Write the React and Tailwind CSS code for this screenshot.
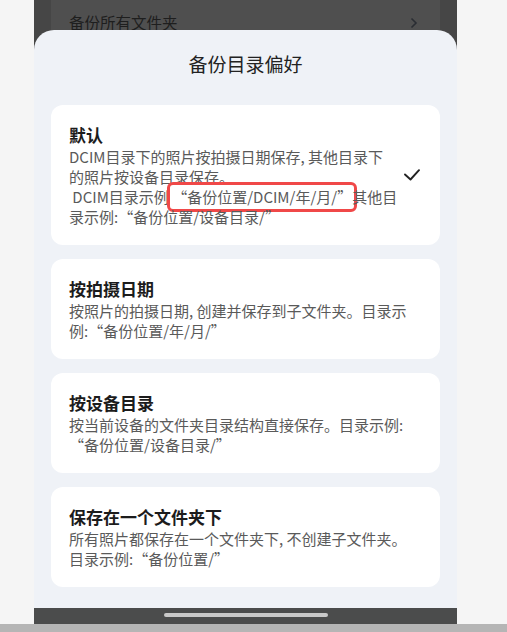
import React from 'react'

const FONT = { fontFamily: '"Noto Sans CJK SC", "Noto Sans", sans-serif' }

const options = [
  {
    title: '按拍摄日期',
    lines: ['按照片的拍摄日期, 创建并保存到子文件夹。目录示', '例:“备份位置/年/月/”'],
  },
  {
    title: '按设备目录',
    lines: ['按当前设备的文件夹目录结构直接保存。目录示例:', '“备份位置/设备目录/”'],
  },
  {
    title: '保存在一个文件夹下',
    lines: ['所有照片都保存在一个文件夹下, 不创建子文件夹。', '目录示例:“备份位置/”'],
  },
]

function Check() {
  return (
    <svg width="16" height="12" viewBox="0 0 16 12" fill="none">
      <path d="M1 5.5 L6.5 10.5 L15 1.2" stroke="#222" strokeWidth="1.9" strokeLinecap="round" strokeLinejoin="round" />
    </svg>
  )
}

export default function App() {
  return (
    <div className="w-full h-[632px] bg-[#f5f5f5] flex flex-col" style={FONT}>
      <div className="flex-1 flex min-h-0 pl-[34px]">
        <div className="w-[423px] bg-[#464646] flex flex-col">
          {/* dimmed page behind the sheet */}
          <div className="h-[30px] px-[17px] overflow-hidden">
            <div className="h-[40px] bg-[#4f4f4f] pl-[18px] pr-[22px] pt-[10px] flex items-start justify-between">
              <span className="text-[15.5px] leading-[24px] text-[#1e1e1e]">备份所有文件夹</span>
              <svg width="8" height="12" viewBox="0 0 8 12" className="mt-[7px]">
                <path d="M1.5 1.5 L6 6 L1.5 10.5" stroke="#2a2d33" strokeWidth="1.6" fill="none" />
              </svg>
            </div>
          </div>

          {/* bottom sheet */}
          <div className="flex-1 bg-[#eff2f7] rounded-t-[20px] px-[17px] pt-[21px]">
            <div className="text-center text-[19px] leading-[26px] text-[#222] mb-[28px]">备份目录偏好</div>

            <div className="flex flex-col gap-[14px]">
              <div className="bg-white rounded-[12px] pl-[18px] pr-[20px] py-[18px] flex items-center justify-between">
                <div>
                  <div className="text-[17px] leading-[24px] font-semibold text-[#1c1c1c]">默认</div>
                  <div className="text-[15px] leading-[20px] text-[#5a5a5a] whitespace-pre">
                    <div>DCIM目录下的照片按拍摄日期保存, 其他目录下</div>
                    <div>的照片按设备目录保存。</div>
                    <div>
                      {' DCIM目录示例 '}
                      <span className="inline-block outline-[3px] outline-solid outline-[#f04848] outline-offset-[2px] rounded-[1px]">“备份位置/DCIM/年/月/”</span>
                      其他目
                    </div>
                    <div>录示例:“备份位置/设备目录/”</div>
                  </div>
                </div>
                <Check />
              </div>

              {options.map(o => (
                <div key={o.title} className="bg-white rounded-[12px] pl-[18px] pr-[20px] py-[18px]">
                  <div className="text-[17px] leading-[24px] font-semibold text-[#1c1c1c]">{o.title}</div>
                  <div className="text-[15px] leading-[20px] text-[#5a5a5a] whitespace-pre">
                    {o.lines.map(l => <div key={l}>{l}</div>)}
                  </div>
                </div>
              ))}
            </div>
          </div>

          {/* gesture bar */}
          <div className="h-[16px] bg-[#4b4c4c] flex justify-center pt-[5px]">
            <div className="w-[164px] h-[4px] rounded-full bg-[#c9c9c9]" />
          </div>
        </div>
      </div>
      <div className="h-[8px] bg-[#b5b5b5]" />
    </div>
  )
}
